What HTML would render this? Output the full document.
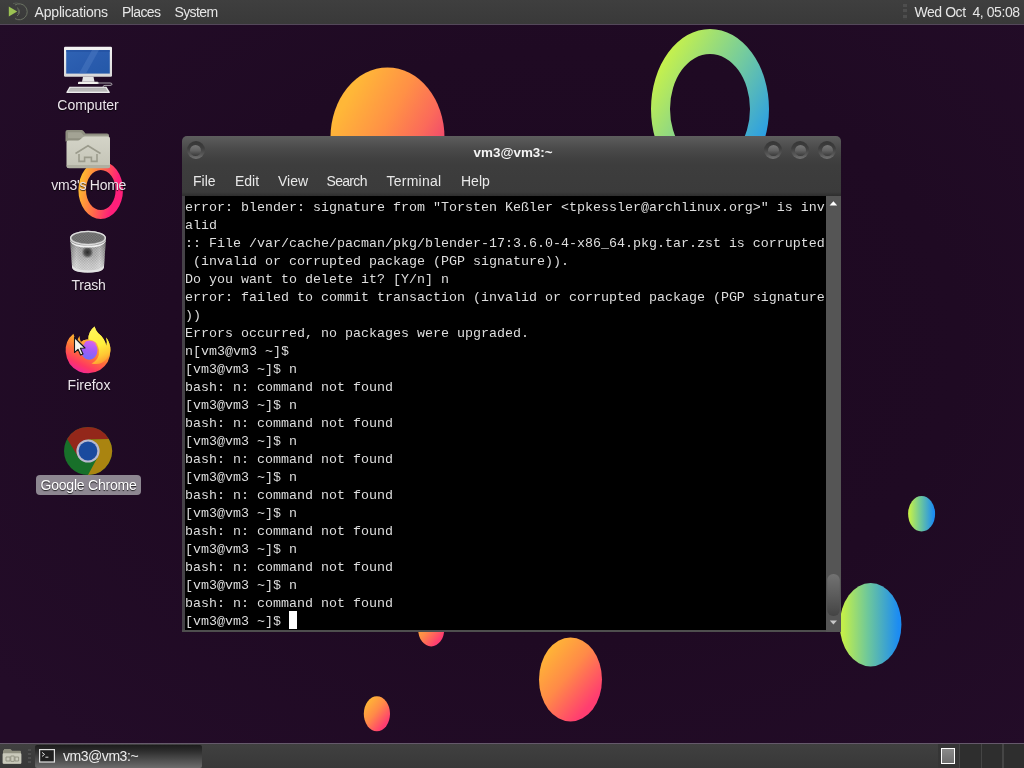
<!DOCTYPE html>
<html><head><meta charset="utf-8">
<style>
*{margin:0;padding:0;box-sizing:border-box}
html,body{width:1024px;height:768px;overflow:hidden;background:#1f0a22;font-family:"Liberation Sans",sans-serif;}
#desk{position:absolute;left:0;top:0;width:1024px;height:768px;overflow:hidden;background:radial-gradient(ellipse 70% 70% at 55% 45%,#1d0921 0%,#1f0a23 55%,#230c28 100%);will-change:transform}
.abs{position:absolute}
#toppanel{position:absolute;left:0;top:0;width:1024px;height:25px;background:linear-gradient(#3f3f3f,#393939);border-bottom:1px solid #54485a;color:#e6e6e6;font-size:14px}
#toppanel span{position:absolute;top:4px;line-height:16px;white-space:nowrap}
#botpanel{position:absolute;left:0;top:743px;width:1024px;height:25px;background:linear-gradient(#404040,#383838);border-top:1px solid #65596b}
.lbl{position:absolute;color:#ece4ec;font-size:14px;line-height:16px;white-space:nowrap;text-align:center;transform:translateX(-50%);text-shadow:0 1px 1px rgba(0,0,0,.8)}
#win{position:absolute;left:182px;top:136px;width:659px;height:496px;border-radius:5px 5px 0 0;background:linear-gradient(#5d5d5d 0px,#4b4b4b 12px,#414141 22px,#3d3d3d 30px,#3b3b3b 56px,#2e2e2e 60px) top/100% 60px no-repeat,linear-gradient(#454247,#454247) top/100% 493.5px no-repeat,#4e4e4e;overflow:hidden}
#term{position:absolute;left:2.5px;top:60px;width:641.5px;height:434px;padding-top:3px;padding-left:0.5px;background:#000;color:#dedede;font-family:"Liberation Mono",monospace;font-size:13.33px;line-height:18px;white-space:pre;overflow:hidden}
#sb{position:absolute;left:644px;top:60px;width:15px;height:436px;background:#555}
.menu{position:absolute;top:37px;color:#e8e8e8;font-size:14px;line-height:16px}
.wbtn{position:absolute;top:5px;width:18px;height:18px;border-radius:50%;background:linear-gradient(#363636 0%,#3e3e3e 40%,#585858 75%,#727272 100%)}
.wbtn::after{content:"";position:absolute;left:3.5px;top:3.5px;width:11px;height:11px;border-radius:50%;background:linear-gradient(#767676 0%,#626262 50%,#3a3a3a 100%)}
</style></head><body>
<div id="desk">
<svg class="abs" style="left:0;top:0" width="1024" height="768" viewBox="0 0 1024 768">
<defs>
<linearGradient id="gO" x1="0.05" y1="0" x2="0.95" y2="1"><stop offset="0.12" stop-color="#ffb536"/><stop offset="0.45" stop-color="#ff8a48"/><stop offset="0.82" stop-color="#ff3d70"/></linearGradient>
<linearGradient id="gO2" gradientUnits="userSpaceOnUse" x1="345" y1="80" x2="445" y2="138"><stop offset="0.1" stop-color="#ffb738"/><stop offset="0.5" stop-color="#ff9046"/><stop offset="0.8" stop-color="#fb6a5a"/><stop offset="1" stop-color="#f04a6c"/></linearGradient>
<linearGradient id="gG" x1="0" y1="0" x2="1" y2="0"><stop offset="0.05" stop-color="#c3ef4a"/><stop offset="0.45" stop-color="#6fc89a"/><stop offset="0.95" stop-color="#1c8cf2"/></linearGradient>
<linearGradient id="gR" x1="0" y1="0.1" x2="1" y2="0.9"><stop offset="0.1" stop-color="#c8f24a"/><stop offset="0.5" stop-color="#76cc9c"/><stop offset="0.95" stop-color="#1a94f4"/></linearGradient>
<linearGradient id="gP" x1="0" y1="0" x2="1" y2="0.3"><stop offset="0.1" stop-color="#ffc12c"/><stop offset="0.55" stop-color="#ff6a4a"/><stop offset="0.9" stop-color="#ff1f7a"/></linearGradient>
</defs>
<ellipse cx="387.5" cy="137.5" rx="57" ry="70" fill="url(#gO2)"/>
<path fill-rule="evenodd" fill="url(#gR)" d="M651,109a59,80 0 1,0 118,0a59,80 0 1,0 -118,0z M670,109a40,55 0 1,0 80,0a40,55 0 1,0 -80,0z"/>
<path fill-rule="evenodd" fill="url(#gP)" d="M78.4,190a22.3,29 0 1,0 44.6,0a22.3,29 0 1,0 -44.6,0z M86,190a14.8,20 0 1,0 29.6,0a14.8,20 0 1,0 -29.6,0z"/>
<ellipse cx="921.6" cy="513.7" rx="13.5" ry="17.7" fill="url(#gG)"/>
<ellipse cx="870.6" cy="624.7" rx="30.8" ry="41.7" fill="url(#gG)"/>
<ellipse cx="570.5" cy="679.5" rx="31.5" ry="42" fill="url(#gO)"/>
<ellipse cx="376.9" cy="713.8" rx="13.1" ry="17.5" fill="url(#gO)"/>
<ellipse cx="431.2" cy="629" rx="13.1" ry="17.5" fill="url(#gO)"/>
</svg>



<!-- computer icon -->
<svg class="abs" style="left:62px;top:44px" width="54" height="52" viewBox="62 44 54 52">
<defs>
<linearGradient id="scr" x1="0" y1="0" x2="1" y2="1"><stop offset="0" stop-color="#2f63b4"/><stop offset="0.5" stop-color="#2a5cae"/><stop offset="1" stop-color="#2458a8"/></linearGradient>
<linearGradient id="bez" x1="0" y1="0" x2="0" y2="1"><stop offset="0" stop-color="#f4f4f4"/><stop offset="1" stop-color="#d8d8d8"/></linearGradient>
</defs>
<rect x="64" y="46.7" width="48" height="30" rx="1.2" fill="url(#bez)"/>
<rect x="66.2" y="50" width="43.6" height="23.6" fill="url(#scr)"/>
<path d="M66.2,50 h43.6 v2 h-43.6z" fill="#1f4c9c" opacity=".5"/>
<path d="M92,50 L99,50 L86,73.6 L79,73.6Z" fill="#5b86cc" opacity=".35"/>
<path d="M83,76.7 h10.5 l1,5 h-12.5z" fill="#e4e4e4"/>
<path d="M79,81.7 h18.5 a1,1 0 0 1 1,1 v1.3 h-20.5 v-1.3 a1,1 0 0 1 1,-1z" fill="#f0f0ec"/>
<path d="M97,83 h13 q2,0 2,1.2 q0,1.2 -2,1.2 h-5 q-2,0 -2,1.6" fill="none" stroke="#c8c8c8" stroke-width="0.8"/>
<path d="M69.5,86.8 h37 l3.4,5.4 q0.3,0.8 -0.8,0.8 h-42 q-1.1,0 -0.8,-0.8z" fill="#ececec"/>
<path d="M70.5,87.8 h35 l2.3,3.6 h-39.6z" fill="#a8a8a8"/>
<path d="M69.5,89 h37 M69,90.2 h38.4" stroke="#d8d8d8" stroke-width="0.5"/>
</svg>

<!-- home folder icon -->
<svg class="abs" style="left:64px;top:128px" width="50" height="44" viewBox="64 128 50 44">
<defs>
<linearGradient id="fld" x1="0" y1="0" x2="0" y2="1"><stop offset="0" stop-color="#d4d4c8"/><stop offset="1" stop-color="#c4c4b6"/></linearGradient>
</defs>
<path d="M67.5,130 h14 q1.2,0 2,1 l2,2.4 h21.5 q2,0 2,2 v6 h-43.5 v-9.4 q0,-2 2,-2z" fill="#8f8f80"/>
<path d="M68,132.2 h13 l2.5,3 h25 v3 h-40.5z" fill="#a3a394"/>
<path d="M68.5,140.5 h9.5 q1.2,0 2.2,-0.9 l2.6,-2.3 q0.9,-0.8 2.2,-0.8 h23 q2,0 2,2 v27.6 q0,2 -2,2 h-39.5 q-2,0 -2,-2 v-23.6 q0,-2 2,-2z" fill="url(#fld)"/>
<path d="M66.8,165 h43.2 v1.2 q0,2 -2,2 h-39.2 q-2,0 -2,-2z" fill="#b0b0a2"/>
<path d="M75.5,153.5 L88,145.8 L100.5,153.5" fill="none" stroke="#9b9b8c" stroke-width="1.6"/>
<path d="M79,154 v7.4 h5.6 v-4 h6.8 v4 h5.6 v-7.4" fill="none" stroke="#9b9b8c" stroke-width="1.6"/>
</svg>

<!-- trash icon -->
<svg class="abs" style="left:66px;top:226px" width="44" height="50" viewBox="66 226 44 50">
<defs>
<pattern id="mesh" width="1.6" height="1.6" patternUnits="userSpaceOnUse"><rect width="1.6" height="1.6" fill="#c2c2c2"/><rect width="0.8" height="0.8" fill="#858585"/><rect x="0.8" y="0.8" width="0.8" height="0.8" fill="#858585"/></pattern>
<linearGradient id="tb" x1="0" y1="0" x2="1" y2="0"><stop offset="0" stop-color="#000" stop-opacity=".3"/><stop offset="0.18" stop-color="#fff" stop-opacity=".18"/><stop offset="0.5" stop-color="#000" stop-opacity="0"/><stop offset="0.82" stop-color="#fff" stop-opacity=".18"/><stop offset="1" stop-color="#000" stop-opacity=".3"/></linearGradient>
<linearGradient id="tv" x1="0" y1="0" x2="0" y2="1"><stop offset="0" stop-color="#000" stop-opacity=".3"/><stop offset="0.5" stop-color="#fff" stop-opacity=".1"/><stop offset="0.75" stop-color="#fff" stop-opacity=".35"/><stop offset="1" stop-color="#fff" stop-opacity=".5"/></linearGradient>
<radialGradient id="tdark" cx="0.5" cy="0.5" r="0.5"><stop offset="0" stop-color="#1c1c1c" stop-opacity=".9"/><stop offset="0.55" stop-color="#2c2c2c" stop-opacity=".7"/><stop offset="1" stop-color="#444" stop-opacity="0"/></radialGradient>
</defs>
<path d="M70,238 L72,266.5 Q72.4,272.4 88,272.4 Q103.6,272.4 104,266.5 L106,238 Z" fill="url(#mesh)"/>
<path d="M70,238 L72,266.5 Q72.4,272.4 88,272.4 Q103.6,272.4 104,266.5 L106,238 Z" fill="url(#tb)"/>
<path d="M70,238 L72,266.5 Q72.4,272.4 88,272.4 Q103.6,272.4 104,266.5 L106,238 Z" fill="url(#tv)"/>
<rect x="81.5" y="246" width="12" height="12.5" rx="3" fill="url(#tdark)"/>
<ellipse cx="88" cy="238" rx="18" ry="7.2" fill="#909090"/>
<ellipse cx="88" cy="237.8" rx="16.2" ry="5.6" fill="url(#mesh)"/>
<ellipse cx="88" cy="237.8" rx="16.2" ry="5.6" fill="#2a2a2a" opacity=".42"/>
<ellipse cx="88" cy="238" rx="17.4" ry="6.6" fill="none" stroke="#dcdcdc" stroke-width="1.3"/>
<path d="M70.2,239.4 Q72,245.6 88,245.6 Q104,245.6 105.8,239.4 L105.6,241.6 Q103,247.6 88,247.6 Q73,247.6 70.4,241.6Z" fill="#f0f0f0"/>
<path d="M72.2,265 Q74,270.4 88,270.4 Q102,270.4 103.8,265 L104,267 Q103.4,272.6 88,272.6 Q72.6,272.6 72,267Z" fill="#e2e2e2"/>
</svg>

<!-- firefox icon -->
<svg class="abs" style="left:62px;top:324px" width="52" height="52" viewBox="62 324 52 52">
<defs>
<linearGradient id="ffb" x1="0.75" y1="0.1" x2="0.32" y2="1"><stop offset="0" stop-color="#fff23c"/><stop offset="0.3" stop-color="#ffb52e"/><stop offset="0.58" stop-color="#ff6e3a"/><stop offset="0.82" stop-color="#ff3862"/><stop offset="1" stop-color="#f0259c"/></linearGradient>
<linearGradient id="ffg" x1="0.6" y1="0" x2="0.4" y2="1"><stop offset="0" stop-color="#d864f0"/><stop offset="0.5" stop-color="#a45cf6"/><stop offset="1" stop-color="#6f6efa"/></linearGradient>
<linearGradient id="ffy" x1="0.35" y1="0" x2="0.6" y2="1"><stop offset="0" stop-color="#fff65a"/><stop offset="0.5" stop-color="#fff03c"/><stop offset="0.78" stop-color="#ffc934"/><stop offset="1" stop-color="#ff9632"/></linearGradient>
</defs>
<path d="M79.5,336 Q77.4,338.6 77.2,342.5 Q74.4,338.5 73.4,333.8 Q64.8,341 65.7,352 Q67,366 79,371.4 Q90,375.8 100,370 Q110.5,363 110.4,350 Q110.3,343 106.2,337.6 Q107.5,342.5 106.4,346 Q104.5,338 98,333 Q95.5,330.5 94.6,326.6 Q88.2,331.5 88.4,339.5 Q83.5,339 81,342 Q79.6,339.5 79.5,336Z" fill="url(#ffb)"/>
<ellipse cx="89.2" cy="350.2" rx="8.3" ry="9.6" fill="url(#ffg)"/>
<path d="M94.6,326.6 Q88.2,331.5 88.4,339.5 Q94.5,340 97.6,345 Q100,350 98.8,355 Q97,361 91.5,363.4 Q101,366 106.5,359 Q110.6,354 110.4,350 Q110.3,343 106.2,337.6 Q107.5,342.5 106.4,346 Q104.5,338 98,333 Q95.5,330.5 94.6,326.6Z" fill="url(#ffy)"/>
<path d="M81,342 Q83.5,339 88.4,339.5 Q84.6,341.4 84,345 Q82,344.6 81,342Z" fill="#ffa23a"/>
<path d="M92,340.4 Q96,341.6 97.6,345 Q95,343 92.6,343.4Z" fill="#e868d0" opacity=".8"/>
</svg>

<!-- chrome icon (dimmed/selected) -->
<svg class="abs" style="left:62px;top:425px" width="52" height="52" viewBox="62 425 52 52">
<circle cx="88" cy="451" r="24" fill="#18702a"/>
<path d="M67.2,439 A24,24 0 0,1 108.8,439 L88,439.4 L88,451 L78.1,456.7 Z" fill="#93271a"/>
<path d="M108.8,439 A24,24 0 0,1 88,475 L97.9,456.7 L88,451 L88,439.4 Z" fill="#aa8410"/>
<circle cx="88" cy="451" r="11.6" fill="#b9b9cf"/>
<circle cx="88" cy="451" r="9.4" fill="#1a4a9e"/>
</svg>

<div id="toppanel">
<svg class="abs" style="left:6px;top:2px" width="24" height="20" viewBox="6 2 24 20">
<path d="M8.8,6.6 L17.2,11.6 L8.8,16.5 Z" fill="#9cc353"/>
<path d="M15,5 A8,8 0 1,1 15,18.6" fill="none" stroke="#6b7263" stroke-width="1"/>
<path d="M17,7.6 A4.8,4.8 0 0,1 17,16" fill="none" stroke="#6b7263" stroke-width="1"/>
<path d="M17.6,9.6 A2.8,2.8 0 0,1 17.6,14" fill="none" stroke="#666c60" stroke-width="0.9"/>
<path d="M13,3.6 A9,9 0 0,1 20,3.8" fill="none" stroke="#5c6258" stroke-width="0.8"/>
</svg>
<span style="left:34.5px;letter-spacing:-0.17px">Applications</span><span style="left:122px;letter-spacing:-0.6px">Places</span><span style="left:174.5px;letter-spacing:-0.62px">System</span>
<div class="abs" style="left:903px;top:4px;width:4px;height:16px;background:repeating-linear-gradient(#4e4e4e 0 3px,#3d3d3d 3px 5.3px)"></div>
<span style="left:914.5px;letter-spacing:-0.44px;white-space:pre">Wed Oct  4, 05:08</span>
</div>

<div class="lbl" style="left:88px;top:97px">Computer</div>
<div class="lbl" style="left:88.7px;top:177px;letter-spacing:-0.25px">vm3's Home</div>
<div class="lbl" style="left:88.6px;top:277px;letter-spacing:-0.25px">Trash</div>
<div class="lbl" style="left:89px;top:377px">Firefox</div>
<div class="abs" style="left:36px;top:475px;width:105px;height:20px;border-radius:4px;background:#8d8791"></div>
<div class="lbl" style="left:88.5px;top:477px;color:#fff;letter-spacing:-0.22px">Google Chrome</div>

<div id="win">
<div class="wbtn" style="left:4.8px"></div>
<div class="wbtn" style="left:582px"></div><div class="wbtn" style="left:609px"></div><div class="wbtn" style="left:636px"></div>
<div class="abs" style="left:1.6px;top:9px;width:659px;text-align:center;color:#f4f4f4;font-weight:bold;font-size:13.4px;line-height:16px">vm3@vm3:~</div>
<span class="menu" style="left:11px">File</span><span class="menu" style="left:53px">Edit</span><span class="menu" style="left:96px">View</span><span class="menu" style="left:144.5px;letter-spacing:-0.68px">Search</span><span class="menu" style="left:204.5px;letter-spacing:0.25px">Terminal</span><span class="menu" style="left:279px">Help</span>
<div id="sb">
<svg class="abs" style="left:0;top:0" width="15" height="436" viewBox="0 0 15 436">
<defs><linearGradient id="thumb" x1="0" y1="0" x2="0" y2="1"><stop offset="0" stop-color="#727272"/><stop offset="0.5" stop-color="#5c5c5c"/><stop offset="1" stop-color="#444"/></linearGradient></defs>
<path d="M3.6,9.4 L7.4,5.2 L11.2,9.4Z" fill="#fff"/>
<rect x="1.2" y="378" width="12.6" height="42" rx="6" fill="url(#thumb)"/>
<path d="M3.8,424.4 L7.4,428.6 L11,424.4Z" fill="#c8c8c8"/>
</svg></div>
<div id="term">error: blender: signature from "Torsten Keßler &lt;tpkessler@archlinux.org&gt;" is inv
alid
:: File /var/cache/pacman/pkg/blender-17:3.6.0-4-x86_64.pkg.tar.zst is corrupted
 (invalid or corrupted package (PGP signature)).
Do you want to delete it? [Y/n] n
error: failed to commit transaction (invalid or corrupted package (PGP signature
))
Errors occurred, no packages were upgraded.
n[vm3@vm3 ~]$ 
[vm3@vm3 ~]$ n
bash: n: command not found
[vm3@vm3 ~]$ n
bash: n: command not found
[vm3@vm3 ~]$ n
bash: n: command not found
[vm3@vm3 ~]$ n
bash: n: command not found
[vm3@vm3 ~]$ n
bash: n: command not found
[vm3@vm3 ~]$ n
bash: n: command not found
[vm3@vm3 ~]$ n
bash: n: command not found
[vm3@vm3 ~]$ <div style="position:absolute;left:104.5px;top:415px;width:8px;height:18px;background:#fff"></div></div>
</div>

<div id="botpanel">
<svg class="abs" style="left:1px;top:3px" width="24" height="20" viewBox="1 747 24 20">
<path d="M4,749 h6.5 l1.6,1.8 h7.9 q1,0 1,1 v11 q0,1 -1,1 h-16 q-1,0 -1,-1 v-11.8 q0,-1 1,-1z" fill="#8f8f80"/>
<path d="M3.6,753.2 h16.8 q1,0 1,1 v8.6 q0,1 -1,1 h-16.8 q-1,0 -1,-1 v-8.6 q0,-1 1,-1z" fill="#c9c9bb"/>
<path d="M6,757 h4 v4 h-4z M10.8,756 h3.4 v5.4 h-3.4z M15,757 h3.6 v4 h-3.6z" fill="none" stroke="#8f8f80" stroke-width="0.9"/>
</svg>
<div class="abs" style="left:28px;top:5px;width:3px;height:15px;background:repeating-linear-gradient(#4e4e4e 0 2px,#3a3a3a 2px 4px)"></div>
<div class="abs" style="left:35px;top:1px;width:167px;height:23px;background:linear-gradient(#1c1c1c 0%,#2c2c2c 25%,#4a4a4a 60%,#6c6c6c 100%);border-radius:2px"></div>
<svg class="abs" style="left:39px;top:5px" width="16" height="14" viewBox="0 0 16 14">
<rect x="0.6" y="0.6" width="14.8" height="12.4" fill="#1f1f1f" stroke="#e0e0e0" stroke-width="1.2"/>
<path d="M3,3.4 l2.6,2 l-2.6,2" fill="none" stroke="#ddd" stroke-width="1"/><path d="M6.4,8.2 h3" stroke="#ddd" stroke-width="1"/>
</svg>
<div class="abs" style="left:63px;top:4px;color:#ececec;font-size:14px;line-height:16px;white-space:nowrap;letter-spacing:-0.45px">vm3@vm3:~</div>
<!-- workspace switcher -->
<div class="abs" style="left:938px;top:0;width:86px;height:24px;background:#2e2e2e"></div>
<div class="abs" style="left:938px;top:0;width:21px;height:24px;background:#353535"></div>
<div class="abs" style="left:958.5px;top:0;width:1.5px;height:24px;background:#454545"></div>
<div class="abs" style="left:980.5px;top:0;width:1.5px;height:24px;background:#454545"></div>
<div class="abs" style="left:1002px;top:0;width:1.5px;height:24px;background:#454545"></div>
<div class="abs" style="left:941px;top:4px;width:14px;height:16px;border:1.5px solid #fff;background:linear-gradient(#8a8a8a,#6e6e6e)"></div>
</div>
<!-- mouse cursor -->
<svg class="abs" style="left:72.3px;top:334.6px" width="16" height="22" viewBox="0 0 16 22">
<path d="M2.5,2.5 L2.5,17.5 L6,14.3 L8.6,20 L11,18.9 L8.4,13.3 L13,13 Z" fill="#f4f4ec" stroke="#1a1a1a" stroke-width="1.1" stroke-linejoin="round"/>
</svg>

</div>
</body></html>
